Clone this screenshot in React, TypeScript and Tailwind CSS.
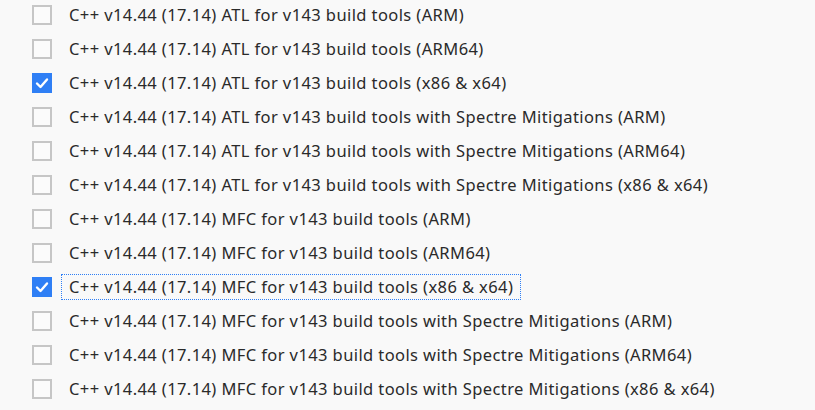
import React from 'react';

const items = [
  { label: 'C++ v14.44 (17.14) ATL for v143 build tools (ARM)', checked: false },
  { label: 'C++ v14.44 (17.14) ATL for v143 build tools (ARM64)', checked: false },
  { label: 'C++ v14.44 (17.14) ATL for v143 build tools (x86 & x64)', checked: true },
  { label: 'C++ v14.44 (17.14) ATL for v143 build tools with Spectre Mitigations (ARM)', checked: false },
  { label: 'C++ v14.44 (17.14) ATL for v143 build tools with Spectre Mitigations (ARM64)', checked: false },
  { label: 'C++ v14.44 (17.14) ATL for v143 build tools with Spectre Mitigations (x86 & x64)', checked: false },
  { label: 'C++ v14.44 (17.14) MFC for v143 build tools (ARM)', checked: false },
  { label: 'C++ v14.44 (17.14) MFC for v143 build tools (ARM64)', checked: false },
  { label: 'C++ v14.44 (17.14) MFC for v143 build tools (x86 & x64)', checked: true, focused: true },
  { label: 'C++ v14.44 (17.14) MFC for v143 build tools with Spectre Mitigations (ARM)', checked: false },
  { label: 'C++ v14.44 (17.14) MFC for v143 build tools with Spectre Mitigations (ARM64)', checked: false },
  { label: 'C++ v14.44 (17.14) MFC for v143 build tools with Spectre Mitigations (x86 & x64)', checked: false },
];

const CheckBox: React.FC<{ checked: boolean }> = ({ checked }) =>
  checked ? (
    <div className="w-5 h-5 bg-[#2f7ff5] flex items-center justify-center shrink-0">
      <svg width="20" height="20" viewBox="0 0 20 20" fill="none">
        <path d="M5 10.5 L8.5 14 L15 6.5" stroke="white" strokeWidth="2.4" strokeLinecap="round" strokeLinejoin="round" />
      </svg>
    </div>
  ) : (
    <div className="w-5 h-5 border-2 border-[#c6c6c6] bg-[#fbfbfb] shrink-0" />
  );

export default function App() {
  return (
    <div
      className="w-[815px] h-[410px] overflow-hidden bg-[#f9f9f9] text-[#2a2a2a]"
      style={{ fontFamily: '"Noto Sans", "Open Sans", sans-serif' }}
    >
      <div className="-mt-[2px] pl-8">
        {items.map((item, i) => (
          <div key={i} className="h-[34px] flex items-center">
            <CheckBox checked={item.checked} />
            <div
              className={
                'ml-[9px] h-[26px] px-[7px] flex items-center text-[16.5px] tracking-[0.4px] whitespace-nowrap border border-dotted ' +
                (item.focused ? 'border-[#2f7ff5]' : 'border-transparent')
              }
            >
              {item.label}
            </div>
          </div>
        ))}
      </div>
    </div>
  );
}
